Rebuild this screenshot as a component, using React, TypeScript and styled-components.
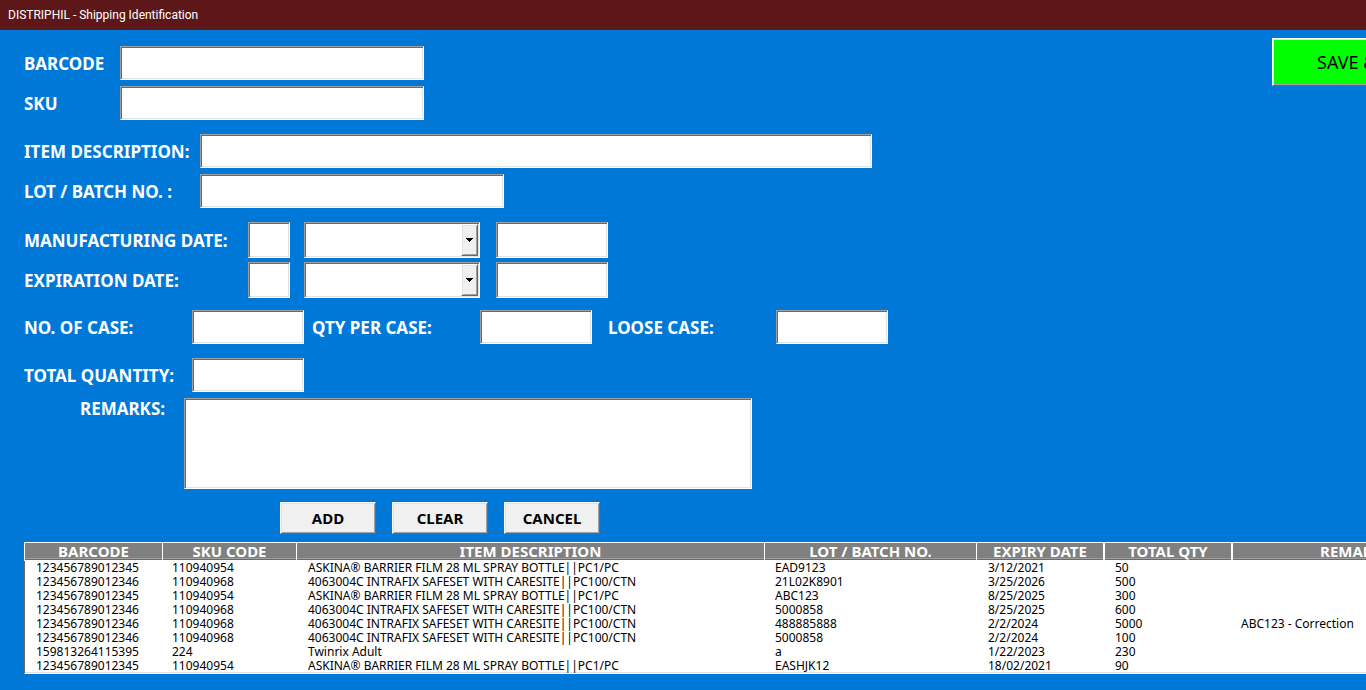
import React from "react";
import styled, { createGlobalStyle, css } from "styled-components";

const GlobalStyle = createGlobalStyle`
  *, *::before, *::after { box-sizing: border-box; }
  html, body { margin: 0; background: #0078d7; }
  body {
    font-family: "Noto Sans", "Open Sans", sans-serif;
    overflow-x: hidden;
  }
  button, input, select, textarea { font: inherit; border-radius: 0; }
`;

const sunken = css`
  background: #fff;
  border: 1px solid;
  border-color: #a0a0a0 #fff #fff #a0a0a0;
  box-shadow: inset 1px 1px 0 #696969, inset -1px -1px 0 #e3e3e3;
`;

const raised = css`
  border: 1px solid;
  border-color: #fff #696969 #696969 #fff;
  box-shadow: inset 1px 1px 0 #e3e3e3, inset -1px -1px 0 #a0a0a0;
`;

const Window = styled.div`
  min-height: 100vh;
  display: flex;
  flex-direction: column;
`;

const TitleBar = styled.header`
  display: flex;
  align-items: center;
  height: 30px;
  padding: 0 8px;
  background: #5d1719;
`;

const Title = styled.h1`
  margin: 0;
  color: #fff;
  font: 400 12px/16px Roboto, "Open Sans", sans-serif;
`;

const Content = styled.main`
  flex: 1;
  overflow: hidden;
  padding: 8px 0 16px 24px;
`;

const Top = styled.form`
  display: flex;
  align-items: flex-start;
  justify-content: space-between;
`;

const Fields = styled.div`
  display: flex;
  flex-direction: column;
  gap: 14px;
  padding-top: 8px;
`;

const Group = styled.div<{ $gap: number }>`
  display: flex;
  flex-direction: column;
  gap: ${(p) => p.$gap}px;
`;

const Row = styled.div`
  display: flex;
  align-items: center;
`;

const Label = styled.label<{ $width: number }>`
  flex: none;
  width: ${(p) => p.$width}px;
  padding-top: 2px;
  color: #fff;
  font-size: 17px;
  font-weight: 700;
  line-height: 18px;
  white-space: nowrap;
`;

const TextBox = styled.input<{ $width: number; $tall?: boolean; $after?: number }>`
  ${sunken}
  flex: none;
  width: ${(p) => p.$width}px;
  height: ${(p) => (p.$tall ? 36 : 34)}px;
  margin: 0 ${(p) => p.$after ?? 0}px 0 0;
  padding: 0 4px;
  outline: none;
`;

const Combo = styled.div`
  position: relative;
  width: 176px;
  height: 36px;
  margin-right: 16px;
`;

const ComboSelect = styled.select`
  ${sunken}
  appearance: none;
  width: 100%;
  height: 100%;
  padding: 0 20px 0 4px;
  outline: none;
`;

const ComboArrow = styled.span`
  ${raised}
  position: absolute;
  inset: 2px 2px 2px auto;
  width: 17px;
  display: grid;
  place-items: center;
  background: #f0f0f0;
  pointer-events: none;
`;

const RemarksRow = styled.div`
  display: flex;
  align-items: flex-start;
  padding-left: 56px;
`;

const RemarksBox = styled.textarea`
  ${sunken}
  width: 568px;
  height: 91px;
  margin: 0;
  padding: 4px;
  resize: none;
  outline: none;
`;

const Actions = styled.div`
  display: flex;
  gap: 16px;
  padding: 1px 0 8px 256px;
`;

const ActionButton = styled.button`
  ${raised}
  width: 96px;
  height: 32px;
  padding: 0;
  background: #f0f0f0;
  color: #000;
  font-size: 15px;
  font-weight: 700;
  line-height: 20px;
`;

const SaveButton = styled.button`
  ${raised}
  flex: none;
  width: 176px;
  height: 48px;
  margin-right: -82px;
  padding: 0 0 0 44px;
  background: #0f0;
  color: #000;
  font-size: 18px;
  line-height: 24px;
  text-align: left;
  white-space: nowrap;
`;

const Records = styled.table`
  table-layout: fixed;
  width: calc(100% + 112px);
  border-collapse: separate;
  border-spacing: 0;
  background: #fff;
`;

const Col = styled.col<{ $width?: number }>`
  width: ${(p) => (p.$width ? `${p.$width}px` : "auto")};
`;

const HeadCell = styled.th<{ $divider: number }>`
  height: 19px;
  padding: 0 0 1px;
  border: solid #fff;
  border-width: 1px 0 0 ${(p) => p.$divider}px;
  background: linear-gradient(#808080 15px, #a0a0a0 15px, #a0a0a0 16px, #696969 16px, #696969 17px, #fff 17px);
  color: #fff;
  font-size: 15px;
  font-weight: 700;
  line-height: 17px;
  white-space: nowrap;
`;

const BodyCell = styled.td<{ $inset: number }>`
  height: 14px;
  padding: 0 0 0 ${(p) => p.$inset}px;
  color: #000;
  font-size: 12px;
  line-height: 14px;
  white-space: nowrap;

  &:first-child {
    border-left: 1px solid #696969;
  }
`;

const BodyRow = styled.tr`
  &:last-child td {
    border-bottom: 1px solid #fff;
    box-shadow: inset 0 -1px 0 #e3e3e3;
  }
`;

const columns = [
  { name: "BARCODE", width: 138, divider: 1, inset: 11 },
  { name: "SKU CODE", width: 134, divider: 1, inset: 10 },
  { name: "ITEM DESCRIPTION", width: 468, divider: 1, inset: 12 },
  { name: "LOT / BATCH NO.", width: 212, divider: 1, inset: 11 },
  { name: "EXPIRY DATE", width: 127, divider: 1, inset: 12 },
  { name: "TOTAL QTY", width: 128, divider: 2, inset: 12 },
  { name: "REMARKS", divider: 2, inset: 10 },
];

const askina = "ASKINA® BARRIER FILM 28 ML SPRAY BOTTLE||PC1/PC";
const intrafix = "4063004C INTRAFIX SAFESET WITH CARESITE||PC100/CTN";

const records = [
  ["123456789012345", "110940954", askina, "EAD9123", "3/12/2021", "50", ""],
  ["123456789012346", "110940968", intrafix, "21L02K8901", "3/25/2026", "500", ""],
  ["123456789012345", "110940954", askina, "ABC123", "8/25/2025", "300", ""],
  ["123456789012346", "110940968", intrafix, "5000858", "8/25/2025", "600", ""],
  ["123456789012346", "110940968", intrafix, "488885888", "2/2/2024", "5000", "ABC123 - Correction"],
  ["123456789012346", "110940968", intrafix, "5000858", "2/2/2024", "100", ""],
  ["159813264115395", "224", "Twinrix Adult", "a", "1/22/2023", "230", ""],
  ["123456789012345", "110940954", askina, "EASHJK12", "18/02/2021", "90", ""],
];

function DateRow({ id, label }: { id: string; label: string }) {
  return (
    <Row>
      <Label htmlFor={`${id}-day`} $width={224}>{label}</Label>
      <TextBox id={`${id}-day`} $width={42} $tall $after={14} />
      <Combo>
        <ComboSelect aria-label={`${label} month`} defaultValue="">
          <option value="" />
        </ComboSelect>
        <ComboArrow aria-hidden="true">
          <svg width="7" height="4" viewBox="0 0 7 4" shapeRendering="crispEdges">
            <path d="M0 0h7v1H0zM1 1h5v1H1zM2 2h3v1H2zM3 3h1v1H3z" />
          </svg>
        </ComboArrow>
      </Combo>
      <TextBox aria-label={`${label} year`} $width={112} $tall />
    </Row>
  );
}

export default function App() {
  return (
    <Window>
      <GlobalStyle />
      <TitleBar>
        <Title>DISTRIPHIL - Shipping Identification</Title>
      </TitleBar>
      <Content>
        <Top onSubmit={(e) => e.preventDefault()}>
          <Fields>
            <Group $gap={6}>
              <Row>
                <Label htmlFor="barcode" $width={96}>BARCODE</Label>
                <TextBox id="barcode" $width={304} />
              </Row>
              <Row>
                <Label htmlFor="sku" $width={96}>SKU</Label>
                <TextBox id="sku" $width={304} />
              </Row>
            </Group>
            <Group $gap={6}>
              <Row>
                <Label htmlFor="item" $width={176}>ITEM DESCRIPTION:</Label>
                <TextBox id="item" $width={672} />
              </Row>
              <Row>
                <Label htmlFor="lot" $width={176}>LOT / BATCH NO. :</Label>
                <TextBox id="lot" $width={304} />
              </Row>
            </Group>
            <Group $gap={12}>
              <Group $gap={4}>
                <DateRow id="made" label="MANUFACTURING DATE:" />
                <DateRow id="expires" label="EXPIRATION DATE:" />
              </Group>
              <Group $gap={14}>
                <Row>
                  <Label htmlFor="cases" $width={168}>NO. OF CASE:</Label>
                  <TextBox id="cases" $width={112} $after={8} />
                  <Label htmlFor="per-case" $width={168}>QTY PER CASE:</Label>
                  <TextBox id="per-case" $width={112} $after={16} />
                  <Label htmlFor="loose" $width={168}>LOOSE CASE:</Label>
                  <TextBox id="loose" $width={112} />
                </Row>
                <Group $gap={6}>
                  <Row>
                    <Label htmlFor="total" $width={168}>TOTAL QUANTITY:</Label>
                    <TextBox id="total" $width={112} />
                  </Row>
                  <RemarksRow>
                    <Label htmlFor="remarks" $width={104}>REMARKS:</Label>
                    <RemarksBox id="remarks" />
                  </RemarksRow>
                </Group>
              </Group>
              <Actions>
                <ActionButton type="button">ADD</ActionButton>
                <ActionButton type="button">CLEAR</ActionButton>
                <ActionButton type="button">CANCEL</ActionButton>
              </Actions>
            </Group>
          </Fields>
          <SaveButton type="submit">SAVE &amp;</SaveButton>
        </Top>
        <Records>
          <colgroup>
            {columns.map((c) => (
              <Col key={c.name} $width={c.width} />
            ))}
          </colgroup>
          <thead>
            <tr>
              {columns.map((c) => (
                <HeadCell key={c.name} scope="col" $divider={c.divider}>{c.name}</HeadCell>
              ))}
            </tr>
          </thead>
          <tbody>
            {records.map((r, i) => (
              <BodyRow key={i}>
                {r.map((value, j) => (
                  <BodyCell key={j} $inset={columns[j].inset}>{value}</BodyCell>
                ))}
              </BodyRow>
            ))}
          </tbody>
        </Records>
      </Content>
    </Window>
  );
}
